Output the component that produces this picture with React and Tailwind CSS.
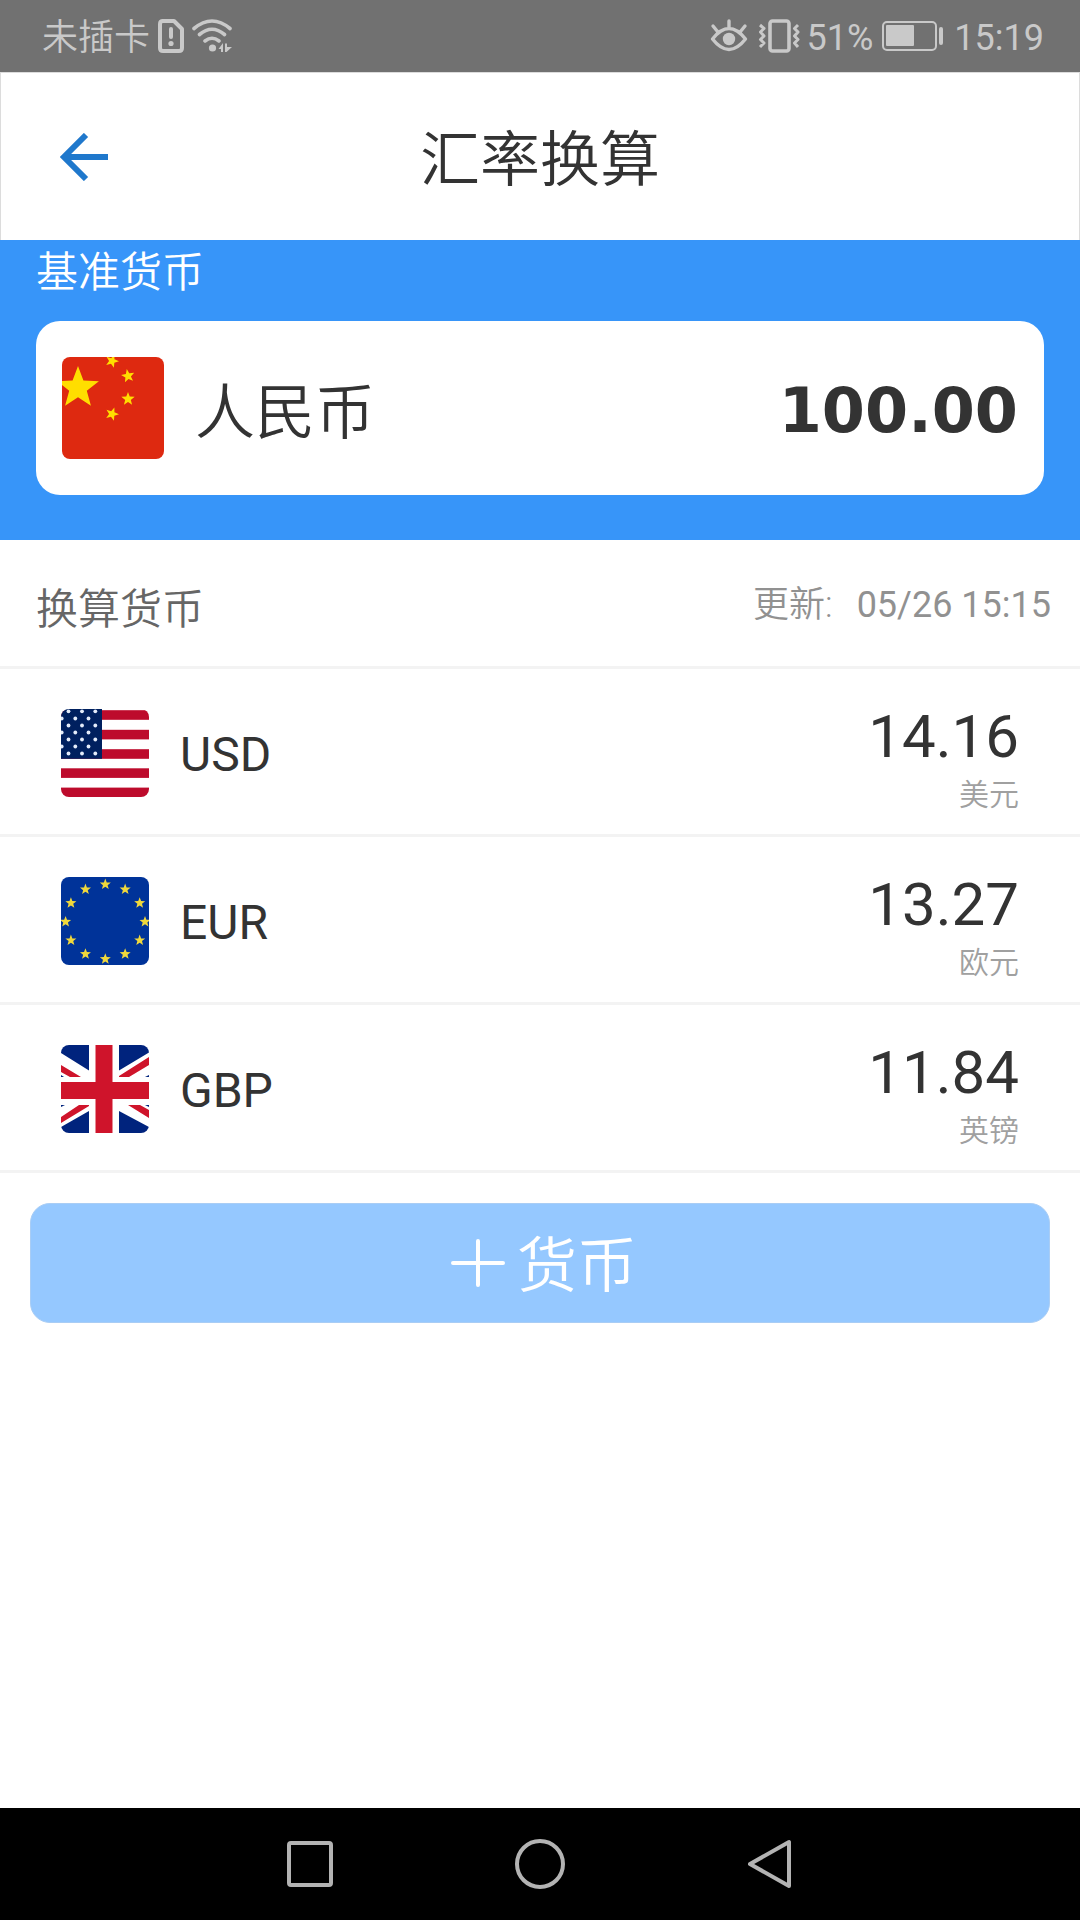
import { useState } from 'react';

const rates = [
  { code: 'USD', name: '美元', value: '14.16', Flag: UsFlag },
  { code: 'EUR', name: '欧元', value: '13.27', Flag: EuFlag },
  { code: 'GBP', name: '英镑', value: '11.84', Flag: GbFlag },
];

const starPoints = (cx, cy, r, turn = 0) =>
  Array.from({ length: 10 }, (_, i) => {
    const radius = i % 2 ? r * 0.42 : r;
    const angle = ((turn + i * 36 - 90) * Math.PI) / 180;
    return `${(cx + radius * Math.cos(angle)).toFixed(2)},${(cy + radius * Math.sin(angle)).toFixed(2)}`;
  }).join(' ');

function CnFlag() {
  return (
    <svg viewBox="0 0 102 102" className="size-[102px] shrink-0 rounded-lg" aria-hidden="true">
      <rect width="102" height="102" fill="#de2910" />
      <g fill="#ffde00">
        <polygon points={starPoints(16, 31, 22)} />
        <polygon points={starPoints(50, 4, 7, 20)} />
        <polygon points={starPoints(66, 19, 7, -10)} />
        <polygon points={starPoints(66, 42, 7, 0)} />
        <polygon points={starPoints(50, 57, 7, 20)} />
      </g>
    </svg>
  );
}

function UsFlag() {
  const rows = [2.3, 9.5, 16.5, 23.5, 30.5, 37.5, 44.5];
  return (
    <svg viewBox="0 0 88 88" className="size-[88px] shrink-0 rounded-lg" aria-hidden="true">
      <rect width="88" height="88" fill="#fff" />
      {[1.2, 20.8, 40.2, 59.3, 78.6].map((y) => (
        <rect key={y} y={y} width="88" height="9.6" fill="#bd0b2c" />
      ))}
      <rect width="41" height="49.8" fill="#00205f" />
      {rows.map((y, i) =>
        (i % 2 ? [0.7, 14.3, 27.5] : [7.5, 21, 34.3]).map((x) => (
          <circle key={`${x}-${y}`} cx={x} cy={y} r="1.9" fill="#e4ecfa" />
        ))
      )}
    </svg>
  );
}

function EuFlag() {
  return (
    <svg viewBox="0 0 88 88" className="size-[88px] shrink-0 rounded-lg" aria-hidden="true">
      <rect width="88" height="88" fill="#039" />
      {Array.from({ length: 12 }, (_, i) => {
        const a = (i * Math.PI) / 6;
        return (
          <polygon
            key={i}
            points={starPoints(44.3 + 39.7 * Math.sin(a), 44.7 - 37.3 * Math.cos(a), 5.8)}
            fill="#f0d83c"
          />
        );
      })}
    </svg>
  );
}

function GbFlag() {
  return (
    <svg viewBox="0 0 88 88" className="size-[88px] shrink-0 rounded-lg" aria-hidden="true">
      <rect width="88" height="88" fill="#fff" />
      <path
        d="M0 0H28V25.5L0 8ZM58 0H88V7.5L58 25.5ZM0 88V82L28 66V88ZM58 88V66L88 82V88ZM0 30L3 32H0ZM88 30L84 32H88ZM0 60H4L0 62ZM88 60H84L88 62Z"
        fill="#00237d"
      />
      <path
        d="M0 20L20 32H9L0 27ZM58 31L88 12V20L68 32H58ZM0 72L18 60H28V61L0 78ZM67 60H79L88 65V73Z"
        fill="#cf142b"
      />
      <path d="M34.5 0H51.5V37H88V54H51.5V88H34.5V54H0V37H34.5Z" fill="#cf142b" />
    </svg>
  );
}

function StatusBar() {
  return (
    <div className="flex h-[72px] items-center justify-between bg-[#717171] pl-[42px] pr-9 text-4xl text-[#c9c9c9]">
      <div className="flex items-center gap-2">
        <span className="pt-1 font-[350]">未插卡</span>
        <svg width="26" height="34" viewBox="0 0 26 34" fill="none" stroke="currentColor" aria-hidden="true">
          <path d="M4 2H16L24 10V29Q24 32 21 32H5Q2 32 2 29V5Q2 2 5 2Z" strokeWidth="4" strokeLinejoin="round" />
          <path d="M13 10V18" strokeWidth="4" strokeLinecap="round" />
          <circle cx="13" cy="24.5" r="2.6" fill="currentColor" stroke="none" />
        </svg>
        <svg width="40" height="34" viewBox="0 0 40 34" fill="none" stroke="currentColor" strokeWidth="3.6" strokeLinecap="round" aria-hidden="true">
          <path d="M2 9.500Q20 -5.500 38 9.500M7.500 15.500Q20 5 32.500 15.500M13 22Q20 16.500 27 22" />
          <circle cx="20.500" cy="29" r="3.6" fill="currentColor" stroke="none" />
          <path d="M26.500 30L31 24V33H29V30ZM33 24.500H35V28H40L34.500 33H33Z" fill="currentColor" stroke="none" />
        </svg>
      </div>
      <div className="flex items-center">
        <svg width="38" height="34" viewBox="0 0 38 34" fill="none" stroke="currentColor" strokeWidth="3.4" strokeLinecap="round" aria-hidden="true">
          <path d="M2.500 20Q19 -1 35.500 20Q19 41 2.500 20ZM19 2V8.500M3 7L7.500 12.500M35 7L30.500 12.500" strokeLinejoin="round" />
          <circle cx="19" cy="20" r="6.2" fill="currentColor" stroke="none" />
        </svg>
        <svg className="ml-[10px]" width="42" height="34" viewBox="0 0 42 34" fill="none" stroke="currentColor" aria-hidden="true">
          <rect x="12" y="2" width="19" height="30" rx="2.500" strokeWidth="3.6" />
          <path d="M2 6L6 9.500L2.500 13L6 17L2.500 20.500L6 24L2 28M40 6L36.500 9.500L40 13L36.500 17L40 20.500L36.500 24L40 28" strokeWidth="3" strokeLinejoin="round" />
        </svg>
        <span className="ml-[7px] pt-1 font-normal">51%</span>
        <svg className="ml-[9px]" width="62" height="30" viewBox="0 0 62 30" fill="none" stroke="currentColor" aria-hidden="true">
          <rect x="1" y="1" width="53" height="28" rx="4" strokeWidth="2" />
          <rect x="4" y="4" width="28" height="21" rx="1" fill="currentColor" stroke="none" />
          <path d="M59 8V22" strokeWidth="4" strokeLinecap="round" />
        </svg>
        <span className="ml-[10px] pt-1 font-normal">15:19</span>
      </div>
    </div>
  );
}

function RateRow({ code, name, value, Flag }) {
  return (
    <li className="flex h-[168px] items-center border-b-3 border-[#f3f3f3] px-[61px] pt-[2px]">
      <Flag />
      <span className="ml-[31px] pt-1 text-5xl font-normal">{code}</span>
      <div className="ml-auto pt-4 text-right">
        <div className="text-6xl leading-[68px] font-normal">{value}</div>
        <div className="text-3xl leading-[48px] text-[#a0a0a0]">{name}</div>
      </div>
    </li>
  );
}

function NavBar() {
  return (
    <nav className="mt-auto flex h-28 items-center justify-center bg-black text-[#b3b3b3]">
      <button type="button" aria-label="最近任务" className="flex w-[230px] justify-center">
        <svg width="46" height="46" viewBox="0 0 46 46" fill="none" stroke="currentColor" strokeWidth="4" aria-hidden="true">
          <rect x="2" y="2" width="42" height="42" rx="2" />
        </svg>
      </button>
      <button type="button" aria-label="主屏幕" className="flex w-[230px] justify-center">
        <svg width="50" height="50" viewBox="0 0 50 50" fill="none" stroke="currentColor" strokeWidth="4" aria-hidden="true">
          <circle cx="25" cy="25" r="23" />
        </svg>
      </button>
      <button type="button" aria-label="返回上一页" className="flex w-[230px] justify-center">
        <svg width="44" height="50" viewBox="0 0 44 50" fill="none" stroke="currentColor" strokeWidth="4" strokeLinejoin="round" aria-hidden="true">
          <path d="M41 3V47L2 25Z" />
        </svg>
      </button>
    </nav>
  );
}

const App = () => {
  const [amount, setAmount] = useState('100.00');

  return (
    <div className="flex min-h-screen flex-col bg-white font-[Roboto,'Noto_Sans_CJK_SC',sans-serif] font-[350] text-[#333]">
      <StatusBar />

      <header className="grid h-[168px] grid-cols-[1fr_auto_1fr] items-center border border-b-0 border-[#dcdcdc] px-[58px]">
        <button type="button" aria-label="返回" className="justify-self-start text-[#1f78cc]">
          <svg width="50" height="48" viewBox="0 0 50 48" fill="none" stroke="currentColor" strokeWidth="6" aria-hidden="true">
            <path d="M27 2L5 24L27 46M5 24H49" />
          </svg>
        </button>
        <h1 className="pt-2 text-6xl">汇率换算</h1>
      </header>

      <section className="bg-[#3795f9] px-9 pb-[45px]">
        <h2 className="h-[81px] text-[42px] leading-[66px] text-white">基准货币</h2>
        <div className="flex h-[174px] items-center rounded-3xl bg-white px-[26px]">
          <CnFlag />
          <label htmlFor="amount" className="ml-[31px] shrink-0 pt-3 text-6xl">人民币</label>
          <input
            id="amount"
            type="text"
            inputMode="decimal"
            value={amount}
            onChange={(e) => setAmount(e.target.value)}
            className="min-w-0 flex-1 bg-transparent pt-1 text-right font-['DejaVu_Sans',sans-serif] text-[62px] font-bold outline-none"
          />
        </div>
      </section>

      <section>
        <div className="flex h-[129px] items-center justify-between border-b-3 border-[#f3f3f3] pl-9 pr-[29px]">
          <h2 className="pt-3 text-[42px] text-[#666]">换算货币</h2>
          <p className="flex gap-6 pt-1 text-4xl text-[#919191]">
            <span>更新:</span>
            <time className="font-normal">05/26 15:15</time>
          </p>
        </div>
        <ul>
          {rates.map((rate) => (
            <RateRow key={rate.code} {...rate} />
          ))}
        </ul>
      </section>

      <button
        type="button"
        className="mx-[30px] mt-[30px] flex h-[120px] items-center justify-center gap-3 rounded-[20px] border border-[#a9cdf5] bg-[#95c8ff] pl-2 text-6xl text-white"
      >
        <svg width="54" height="50" viewBox="0 0 54 50" stroke="currentColor" strokeWidth="4" strokeLinecap="round" aria-hidden="true">
          <path d="M2 25H52M27 3V47" />
        </svg>
        <span className="pt-2">货币</span>
      </button>

      <NavBar />
    </div>
  );
};

export default App;
